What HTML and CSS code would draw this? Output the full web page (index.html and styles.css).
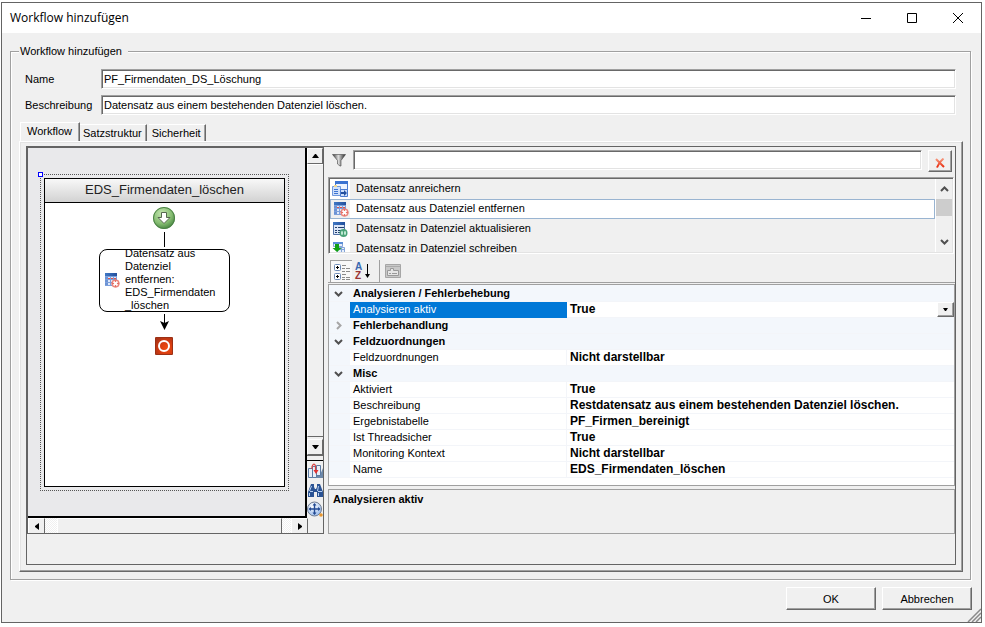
FILE: index.html
```html
<!DOCTYPE html>
<html lang="de">
<head>
<meta charset="utf-8">
<title>Workflow hinzufügen</title>
<link rel="stylesheet" href="styles.css">
</head>
<body>
<svg class="defs" aria-hidden="true">
  <defs>
    <linearGradient id="blueHead" x1="0" y1="0" x2="1" y2="0"><stop offset="0" stop-color="#3f78c4"/><stop offset="1" stop-color="#234f9c"/></linearGradient>
    <radialGradient id="green" cx=".4" cy=".3" r=".75"><stop offset="0" stop-color="#c4e6b0"/><stop offset=".6" stop-color="#86bd72"/><stop offset="1" stop-color="#3f7f3a"/></radialGradient>
    <radialGradient id="red" cx=".65" cy=".65" r=".8"><stop offset="0" stop-color="#f04a10"/><stop offset=".6" stop-color="#d23a10"/><stop offset="1" stop-color="#a83418"/></radialGradient>
    <linearGradient id="funnel" x1="0" y1="0" x2="1" y2="0"><stop offset="0" stop-color="#333"/><stop offset=".45" stop-color="#ddd"/><stop offset="1" stop-color="#222"/></linearGradient>
    <linearGradient id="cross" x1="0" y1="0" x2="0" y2="1"><stop offset="0" stop-color="#f79a80"/><stop offset="1" stop-color="#e8290b"/></linearGradient>
    <radialGradient id="globe" cx=".4" cy=".3" r=".8"><stop offset="0" stop-color="#fff"/><stop offset="1" stop-color="#8fb4ea"/></radialGradient>
    <symbol id="tableDelete" viewBox="0 0 16 16">
      <path fill="#dfe9fa" d="M1 1h12v13H1z"/>
      <path fill="#6c93d4" d="M1 1h3v13H1z"/>
      <path stroke="#7da0dc" d="M1 4.500h12M1 7.500h12M1 10.500h12M1 13.500h9M6.500 4v10M9.500 4v10M12.500 4v6" fill="none"/>
      <path stroke="#e0524a" stroke-dasharray="2 1" d="M4 6.500h9" fill="none"/>
      <path fill="url(#blueHead)" d="M1 1h12v3H1z"/>
      <circle cx="11.500" cy="11.500" r="4" fill="#e25a50"/>
      <circle cx="11.500" cy="11.500" r="3.500" fill="none" stroke="#f0a49a" stroke-width=".7"/>
      <path stroke="#fff" stroke-width="1.800" d="M9.500 9.500l4 4M13.500 9.500l-4 4"/>
    </symbol>
  </defs>
</svg>

<main class="window">
  <header class="titlebar">
    <h1>Workflow hinzufügen</h1>
    <button class="caption" aria-label="Minimieren"><svg width="10" height="10" viewBox="0 0 10 10"><path d="M0 5.500h10"/></svg></button>
    <button class="caption" aria-label="Maximieren"><svg width="10" height="10" viewBox="0 0 10 10"><path d="M.5.5h9v9h-9z"/></svg></button>
    <button class="caption" aria-label="Schließen"><svg width="10" height="10" viewBox="0 0 10 10"><path d="M0 0l10 10M10 0L0 10"/></svg></button>
  </header>

  <fieldset class="group">
    <legend>Workflow hinzufügen</legend>
    <div class="form">
      <label for="name">Name</label>
      <input id="name" class="sunken" type="text" value="PF_Firmendaten_DS_Löschung">
      <label for="desc">Beschreibung</label>
      <input id="desc" class="sunken" type="text" value="Datensatz aus einem bestehenden Datenziel löschen.">
    </div>

    <div class="tabs" role="tablist">
      <button class="tab active" role="tab" aria-selected="true">Workflow</button>
      <button class="tab" role="tab" aria-selected="false">Satzstruktur</button>
      <button class="tab" role="tab" aria-selected="false">Sicherheit</button>
    </div>

    <div class="tabpage" role="tabpanel">
      <div class="panel">
        <section class="designer">
          <div class="canvas">
            <div class="selection">
              <span class="handle"></span>
              <div class="workflow">
                <h2>EDS_Firmendaten_löschen</h2>
                <svg class="start" width="25" height="24" viewBox="0 0 25 24"><circle cx="12" cy="12" r="11" fill="url(#green)"/><circle cx="12" cy="12" r="10.500" fill="none" stroke="#4b8146"/><path d="M9.500 6.500h5v5h3.500L12 17.500 6 11.500h3.500z" fill="#fff" stroke="#55684f"/></svg>
                <svg class="link" width="9" height="15" viewBox="0 0 9 15"><path d="M4.500 0v15" stroke="#000"/></svg>
                <div class="activity">
                  <svg width="16" height="16"><use href="#tableDelete"/></svg>
                  <p>Datensatz aus Datenziel entfernen: EDS_Firmendaten<wbr>_löschen</p>
                </div>
                <svg class="arrow" width="9" height="16" viewBox="0 0 9 16"><path d="M4.500 0v12" stroke="#000"/><path d="M0 7l4.500 2L9 7l-4.500 9z"/></svg>
                <svg class="stop" width="19" height="18" viewBox="0 0 19 18"><rect width="18" height="18" rx="1" fill="#9c3015"/><rect x="1" y="1" width="16" height="16" fill="url(#red)"/><circle cx="9" cy="9" r="5" fill="none" stroke="#fff" stroke-width="2"/></svg>
              </div>
            </div>
          </div>
          <div class="side">
            <div class="vscroll">
              <button class="sbtn" aria-label="Nach oben"><svg width="7" height="4" viewBox="0 0 7 4"><path d="M3 0h1l3 4H0z"/></svg></button>
              <div class="thumb"></div>
              <button class="sbtn" aria-label="Nach unten"><svg width="7" height="4" viewBox="0 0 7 4"><path d="M0 0h7L4 4H3z"/></svg></button>
            </div>
            <div class="tools">
              <button aria-label="Seiten"><svg width="16" height="16" viewBox="0 0 16 16"><path fill="#6d88a8" d="M3 15h13V5l-3 7z"/><path d="M1.500 5.500h4v9h-4zM5.500 3.500h4v11h-4zM9.500 2.500h4v10h-4z" fill="#e8eef7" stroke="#5c7ba3"/><path d="M5 6V3.500Q7-1 8.500 3v6" fill="none" stroke="#d84040" stroke-width="1.200"/><path fill="#e03030" d="M6.500 7h5l-2.500 4z"/></svg></button>
              <button aria-label="Suchen"><svg width="16" height="16" viewBox="0 0 16 16"><path fill="#2b5394" d="M4 2h3v3l1 2h1l1-2V2h3l3 8v5h-6v-5H7v5H1v-5z"/><path stroke="#b9d2f3" d="M4.500 4L2.500 9M11.500 4l-1 5M2.500 11v3M11.500 11v3M3 9.500h3M11 9.500h4" fill="none"/></svg></button>
              <button aria-label="Verschieben"><svg width="16" height="16" viewBox="0 0 16 16"><circle cx="7.500" cy="8" r="7" fill="url(#globe)" stroke="#707c90"/><path d="M7.500 3v10M2.500 8h10" stroke="#234a93" stroke-width="1.400"/><path fill="#234a93" d="M7.500 2L5.500 4.500h4zM7.500 14L5.500 11.500h4zM1.500 8L4 6v4zM13.500 8L11 6v4z"/><circle cx="14" cy="14" r="1.800" fill="#e8962e"/></svg></button>
            </div>
          </div>
          <div class="hscroll">
            <button class="sbtn" aria-label="Nach links"><svg width="4" height="7" viewBox="0 0 4 7"><path d="M4 0v7L0 4V3z"/></svg></button>
            <div class="thumb"></div>
            <button class="sbtn" aria-label="Nach rechts"><svg width="4" height="7" viewBox="0 0 4 7"><path d="M0 0v7l4-3V3z"/></svg></button>
          </div>
        </section>

        <section class="props">
          <div class="filter">
            <svg width="14" height="14" viewBox="0 0 14 14"><path fill="url(#funnel)" stroke="#444" stroke-width=".6" d="M.5 1.500h13L9 7.500V13H8L5.500 11V7.500z"/></svg>
            <input class="sunken" type="text" aria-label="Filter">
            <button class="raised" aria-label="Filter löschen"><svg width="10" height="10" viewBox="0 0 10 10"><path d="M1 1l8 8M8.500.5Q4 4 2 9.500" stroke="url(#cross)" stroke-width="2" fill="none"/></svg></button>
          </div>

          <div class="activities">
            <ul role="listbox" aria-label="Aktivitäten">
              <li role="option"><span class="ico"><svg width="16" height="16" viewBox="0 0 16 16"><path fill="#eef4ff" stroke="#4c7bd0" d="M3.500.5h12v10h-12z"/><path fill="#3b73d1" d="M3 0h13v3H3z"/><path fill="#cfe0fa" stroke="#6f98dc" d="M.5 5.500h8v9h-8z"/><path fill="#f1d98f" d="M2 4h3v2H2z"/><path d="M2 8.500h4M2 10.500h4M2 12.500h4" stroke="#3b73d1"/><path fill="#cfe0fa" stroke="#4c7bd0" d="M8.500 8.500h7v7h-7z"/><path fill="#24509f" d="M9 11h3V9l3 3-3 3v-2H9z"/></svg></span>Datensatz anreichern</li>
              <li role="option" aria-selected="true" class="chosen"><span class="ico"><svg width="16" height="16"><use href="#tableDelete"/></svg></span>Datensatz aus Datenziel entfernen</li>
              <li role="option"><span class="ico"><svg width="16" height="16" viewBox="0 0 16 16"><path fill="#dbe6f8" stroke="#5272a8" d="M1.500 1.500h11v12h-11z"/><path fill="url(#blueHead)" d="M1 1h12v3H1z"/><path d="M3 6.500h2M3 9.500h2M3 11.500h2M6 6.500h6M6 9.500h5M6 11.500h3" stroke="#233f6b"/><circle cx="11.500" cy="12" r="4" fill="#4aa277"/><path d="M9 12h2M12 12h2M10 10v4M13 10v4" stroke="#e5fff0"/></svg></span>Datensatz in Datenziel aktualisieren</li>
              <li role="option"><span class="ico"><svg width="16" height="16" viewBox="0 0 16 16"><path fill="#e7effb" stroke="#84a5d8" d="M1.500 1.500h9v4h-9zM5.500 6.500h7v8h-7z"/><path fill="#5d8fd6" d="M1 1h10v2H1z"/><path d="M6 8.500h7M6 11.500h7M9.500 7v7" stroke="#84a5d8"/><path fill="#12a012" d="M3 3h4v4h2.500L5 11 .5 7H3z"/></svg></span>Datensatz in Datenziel schreiben</li>
            </ul>
            <div class="thinscroll">
              <button aria-label="Nach oben"><svg width="9" height="6" viewBox="0 0 9 6"><path d="M1 5l3.500-3.500L8 5"/></svg></button>
              <div class="thumb"></div>
              <button aria-label="Nach unten"><svg width="9" height="6" viewBox="0 0 9 6"><path d="M1 1l3.500 3.500L8 1"/></svg></button>
            </div>
          </div>

          <div class="toolbar">
            <button class="pressed" aria-label="Kategorisiert"><svg width="18" height="18" viewBox="0 0 18 18"><rect x="1.500" y="1.500" width="6" height="6" rx="1" fill="#fff" stroke="#6f8cb8"/><rect x="1.500" y="10.500" width="6" height="6" rx="1" fill="#fff" stroke="#6f8cb8"/><path d="M3 4.500h3M4.500 3v3M3 13.500h3M4.500 12v3" stroke="#000"/><path d="M9 2.500h4M9 5.500h3M13 5.500h4M9 8.500h3M13 8.500h4M9 11.500h4M9 14.500h3M13 14.500h4M9 16.500h3M13 16.500h4" stroke="#8a8a8a"/></svg></button>
            <button aria-label="Alphabetisch"><svg class="sort" width="18" height="18" viewBox="0 0 18 18"><text x="1" y="8" fill="#3b69b0">A</text><text x="1" y="17" fill="#9a3433">Z</text><path d="M13.500 2v12" stroke="#000"/><path d="M11 12h5l-2.500 4z"/></svg></button>
            <span class="sep"></span>
            <button disabled aria-label="Eigenschaftenseiten"><svg width="16" height="16" viewBox="0 0 16 16"><path fill="#c8c8c8" stroke="#a6a6a6" d="M.5 1.500h15v13H.5z"/><path d="M1 3.500h14" stroke="#aaa"/><path fill="#e6e6e6" stroke="#999" d="M2.500 7.500h3v-2h3v2h5v5h-11z"/><path d="M4 10.500h2M7 10.500h5" stroke="#999"/></svg></button>
          </div>

          <div class="grid">
            <table>
              <colgroup><col class="c1"><col class="c2"><col></colgroup>
              <tbody>
                <tr class="cat first"><td><svg width="9" height="6" viewBox="0 0 9 6"><path d="M1 1l3.500 3.500L8 1"/></svg></td><th colspan="2">Analysieren / Fehlerbehebung</th></tr>
                <tr class="current"><td></td><th>Analysieren aktiv</th><td><div class="value">True<button class="raised" aria-label="Auswahl öffnen"><svg width="5" height="3" viewBox="0 0 5 3"><path d="M0 0h5L3 3H2z"/></svg></button></div></td></tr>
                <tr class="cat closed"><td><svg width="6" height="9" viewBox="0 0 6 9"><path d="M1 1l3.500 3.500L1 8"/></svg></td><th colspan="2">Fehlerbehandlung</th></tr>
                <tr class="cat"><td><svg width="9" height="6" viewBox="0 0 9 6"><path d="M1 1l3.500 3.500L8 1"/></svg></td><th colspan="2">Feldzuordnungen</th></tr>
                <tr><td></td><th>Feldzuordnungen</th><td>Nicht darstellbar</td></tr>
                <tr class="cat"><td><svg width="9" height="6" viewBox="0 0 9 6"><path d="M1 1l3.500 3.500L8 1"/></svg></td><th colspan="2">Misc</th></tr>
                <tr><td></td><th>Aktiviert</th><td>True</td></tr>
                <tr><td></td><th>Beschreibung</th><td>Restdatensatz aus einem bestehenden Datenziel löschen.</td></tr>
                <tr><td></td><th>Ergebnistabelle</th><td>PF_Firmen_bereinigt</td></tr>
                <tr><td></td><th>Ist Threadsicher</th><td>True</td></tr>
                <tr><td></td><th>Monitoring Kontext</th><td>Nicht darstellbar</td></tr>
                <tr><td></td><th>Name</th><td>EDS_Firmendaten_löschen</td></tr>
              </tbody>
            </table>
          </div>
          <div class="help">Analysieren aktiv</div>
        </section>
      </div>
    </div>
  </fieldset>

  <footer class="actions">
    <button class="raised">OK</button>
    <button class="raised">Abbrechen</button>
    <svg class="grip" width="14" height="14" viewBox="0 0 14 14"><path d="M1 14L14 1M5 14l9-9M9 14l5-5" stroke="#8a8a8a" stroke-width="1.500"/></svg>
  </footer>
</main>
</body>
</html>
```

FILE: styles.css
```css
* { box-sizing: border-box; }

body {
  margin: 0;
  padding: 2px 3px 4px 1px;
  min-height: 100vh;
  display: flex;
  background: #fff;
  color: #000;
  font: 11px/16px "Liberation Sans", Arial, sans-serif;
}

button, input {
  font: inherit;
  color: inherit;
  margin: 0;
  padding: 0;
  border: 0;
  background: none;
}

svg { display: block; flex: none; }
.defs { position: absolute; width: 0; height: 0; }

.window {
  flex: 1;
  min-width: 0;
  display: flex;
  flex-direction: column;
  border: 1px solid #646464;
  background: #f0f0f0;
}

/* Title bar */
.titlebar {
  display: flex;
  align-items: center;
  height: 30px;
  background: #fff;
}
.titlebar h1 {
  flex: 1;
  margin: 0 0 0 8px;
  font: 12px/16px "Open Sans", "Noto Sans", sans-serif;
}
.caption {
  width: 46px;
  height: 30px;
  display: grid;
  place-items: center;
}
.caption svg { fill: none; stroke: #000; }

/* Shared bevels */
.sunken {
  height: 20px;
  padding: 0 2px;
  background: #fff;
  border: 1px solid;
  border-color: #a0a0a0 #fff #fff #a0a0a0;
  box-shadow: inset 1px 1px #696969, inset -1px -1px #e3e3e3;
}
.raised {
  background: #f0f0f0;
  border: 1px solid;
  border-color: #fff #696969 #696969 #fff;
  box-shadow: inset -1px -1px #a0a0a0;
}

/* Group box */
.group {
  flex: 1;
  min-width: 0;
  display: flex;
  flex-direction: column;
  margin: 10px 10px 0 8px;
  padding: 10px 7px 7px 8px;
  border: 1px solid #a0a0a0;
  box-shadow: 1px 1px #fff, inset 1px 1px #fff;
}
.group legend {
  padding: 0 6px 0 1px;
  background: #f0f0f0;
}
.form {
  display: grid;
  grid-template-columns: 76px 1fr;
  row-gap: 6px;
  align-items: center;
  padding: 0 7px 0 6px;
}
.form .sunken { width: 100%; }

/* Tabs */
.tabs {
  display: flex;
  align-items: flex-end;
  height: 19px;
  margin-top: 7px;
  padding-left: 1px;
}
.tab {
  height: 17px;
  padding: 0 4px 0 3px;
  border-top: 1px solid #fff;
  border-right: 1px solid #696969;
  box-shadow: inset -1px 0 #a0a0a0;
  margin-right: 2px;
}
.tab.active {
  height: 19px;
  padding: 0 7px 2px 6px;
  margin-right: 0;
  border-left: 1px solid #fff;
}
.tabpage {
  flex: 1;
  display: flex;
  padding: 4px 6px 6px;
  border: 1px solid;
  border-color: #fff #696969 #696969 #fff;
  box-shadow: inset -1px -1px #a0a0a0, inset 1px 1px #e3e3e3;
}
.panel {
  flex: 1;
  min-width: 0;
  display: flex;
  gap: 4px;
  padding-bottom: 30px;
  border: 1px solid #646464;
}

/* Designer */
.designer {
  flex: none;
  width: 297px;
  display: grid;
  grid-template: 1fr 15px / 1fr 16px;
  border: 1px solid #646464;
}
.canvas {
  padding: 26px 16px 25px 12px;
  display: flex;
  background: #e9e9eb;
  border: solid #000;
  border-width: 0 2px 2px 0;
}
.selection {
  position: relative;
  flex: 1;
  display: flex;
  padding: 3px;
  border: 1px dotted #555;
}
.handle {
  position: absolute;
  left: -3px;
  top: -3px;
  width: 5px;
  height: 5px;
  background: #fff;
  border: 1px solid #00f;
}
.workflow {
  flex: 1;
  display: flex;
  flex-direction: column;
  align-items: center;
  background: #fff;
  border: 1px solid #000;
}
.workflow h2 {
  align-self: stretch;
  margin: 0 0 3px;
  height: 24px;
  font-size: 13px;
  font-weight: normal;
  line-height: 22px;
  text-align: center;
  color: #222;
  background: linear-gradient(#f8f8f8, #d2d2d2);
  border-bottom: 1px solid #000;
}
.link { margin: 2px 0; }
.activity {
  display: flex;
  align-items: center;
  gap: 5px;
  width: 131px;
  height: 63px;
  padding: 0 5px 2px 4px;
  border: 1px solid #000;
  border-radius: 8px;
  overflow: hidden;
}
.activity p { margin: 0; width: 96px; line-height: 13px; }
.arrow { margin: 2px 0 7px; }

.side { display: flex; flex-direction: column; }
.vscroll {
  flex: 1;
  display: flex;
  flex-direction: column;
  border-bottom: 1px solid #696969;
}
.sbtn {
  flex: none;
  display: grid;
  place-items: center;
  width: 16px;
  height: 16px;
  border: 1px solid;
  border-color: #fff #696969 #696969 #fff;
  background: #f0f0f0;
}
.vscroll .thumb {
  flex: 1;
  margin-bottom: 2px;
  border: solid #fff;
  border-width: 1px 0 0 1px;
  border-bottom: 1px solid #696969;
}
.tools {
  height: 58px;
  margin-top: 4px;
  padding: 2px 0;
  display: flex;
  flex-direction: column;
  gap: 3px;
  border-top: 1px solid #000;
}
.hscroll {
  grid-column: 1 / 3;
  display: flex;
  margin-right: 15px;
  background: repeating-conic-gradient(#fff 0 25%, #f0f0f0 0 50%) 0 0 / 2px 2px;
}
.hscroll .sbtn { width: 17px; height: 15px; border-bottom: 0; }
.hscroll .thumb {
  flex: 1;
  margin: 0 9px 0 12px;
  background: #f0f0f0;
  border: solid #fff;
  border-width: 1px 0 0 1px;
  border-right: 1px solid #696969;
}

/* Property side */
.props { flex: 1; min-width: 0; display: flex; flex-direction: column; }
.filter {
  display: flex;
  padding: 3px 3px 5px 4px;
}
.filter svg { margin-top: 3px; }
.filter .sunken { flex: 1; min-width: 0; margin: 0 6px 0 7px; }
.filter .raised {
  width: 24px;
  height: 22px;
  display: grid;
  place-items: center;
}

.activities {
  display: flex;
  height: 77px;
  margin-right: 1px;
  padding: 1px;
  border: 1px solid;
  border-color: #a0a0a0 #fff #fff #a0a0a0;
  box-shadow: inset 1px 1px #696969, inset -1px -1px #e3e3e3;
}
.activities ul {
  flex: 1;
  margin: 0;
  padding: 0;
  list-style: none;
  overflow: hidden;
}
.activities li {
  display: flex;
  align-items: flex-start;
  gap: 6px;
  height: 20px;
  line-height: 18px;
}
.ico {
  width: 20px;
  height: 20px;
  display: grid;
  place-items: center;
  background: #fff;
}
.activities .chosen {
  line-height: 16px;
  background: #fff;
  border: 1px solid #99b4d1;
}
.chosen .ico { width: 19px; height: 18px; background: #f0f0f0; }
.thinscroll {
  width: 17px;
  display: flex;
  flex-direction: column;
  border-left: 1px solid #fff;
}
.thinscroll button { height: 20px; display: grid; place-items: center; }
.thinscroll svg, .grid td > svg { fill: none; stroke: #505050; stroke-width: 2; }
.thinscroll .thumb { height: 17px; margin-bottom: auto; background: #cdcdcd; }

.toolbar {
  display: flex;
  height: 29px;
  padding: 6px 2px 0;
  border-bottom: 1px solid #a0a0a0;
}
.toolbar button { width: 22px; display: grid; place-items: center; }
.toolbar .pressed {
  background: #f8f8f8;
  border: solid #a0a0a0;
  border-width: 1px 0 0 1px;
}
.toolbar .sep { width: 1px; margin: 0 2px 0 5px; background: #a0a0a0; }
.sort text { font-size: 10px; font-weight: bold; }

.grid {
  flex: 1;
  margin-top: 1px;
  background: #fff;
  border: 1px solid #a0a0a0;
}
.grid table {
  width: 100%;
  table-layout: fixed;
  border-collapse: separate;
  border-spacing: 0;
}
.c1 { width: 21px; }
.c2 { width: 217px; }
.grid tr { height: 16px; }
.grid td, .grid th {
  height: 16px;
  padding: 0 0 0 3px;
  line-height: 15px;
  text-align: left;
  white-space: nowrap;
  border-bottom: 1px solid #f3f5f9;
}
.grid td { font-size: 12px; font-weight: bold; }
.grid th { font-weight: normal; border-right: 1px solid #f3f5f9; }
.grid td:first-child { padding-left: 5px; background: #f3f7fc; }
.grid .closed td:first-child { padding-left: 7px; }
.grid .closed svg { stroke: #a6a6a6; }
.grid .cat th { font-weight: bold; background: #f3f7fc; }
.grid .first th, .grid .first td { height: 17px; padding-top: 1px; }
.grid .current th { color: #fff; background: #0078d7; border-color: #0078d7; }
.value { display: flex; justify-content: space-between; }
.value .raised {
  width: 17px;
  height: 15px;
  display: grid;
  place-items: center;
}
.help {
  height: 45px;
  margin-top: 3px;
  padding: 1px 4px;
  font-weight: bold;
  border: 1px solid #a0a0a0;
}

/* Footer */
.actions {
  position: relative;
  display: flex;
  justify-content: flex-end;
  gap: 6px;
  padding: 7px 9px 12px;
}
.actions .raised { width: 90px; height: 23px; }
.grip { position: absolute; right: 0; bottom: 0; }
```
